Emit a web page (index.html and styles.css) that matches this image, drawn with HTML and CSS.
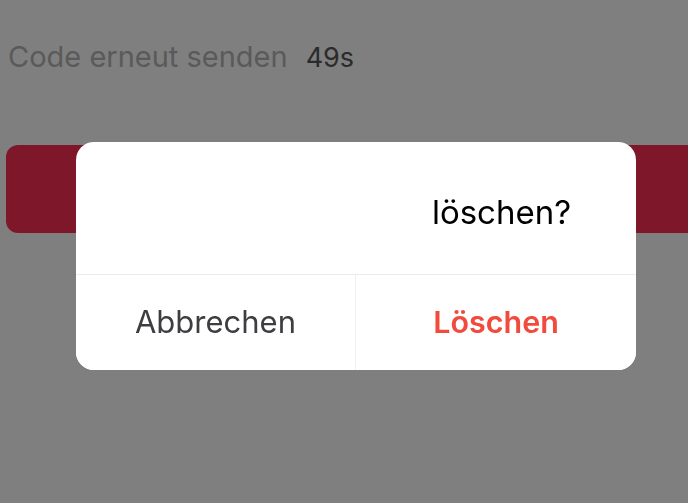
FILE: index.html
```html
<!DOCTYPE html>
<html lang="de">
<head>
<meta charset="utf-8">
<title>Code bestätigen</title>
<link rel="stylesheet" href="styles.css">
</head>
<body>
<main class="page">
  <div class="resend">
    <span class="resend-label">Code erneut senden</span>
    <span class="resend-timer">49s</span>
  </div>
  <button class="primary-btn" type="button">Bestätigen</button>
</main>
<div class="overlay">
  <div class="dialog" role="alertdialog">
    <div class="dialog-msg"><span class="msg-text">löschen?</span></div>
    <div class="dialog-actions">
      <button class="dialog-btn cancel" type="button">Abbrechen</button>
      <button class="dialog-btn destructive" type="button">Löschen</button>
    </div>
  </div>
</div>
</body>
</html>
```

FILE: styles.css
```css
* { box-sizing: border-box; }
html, body {
  margin: 0;
  width: 688px;
  height: 503px;
  overflow: hidden;
  background: #ffffff;
  font-family: Inter, "Liberation Sans", sans-serif;
}
.page {
  padding-top: 40px;
  overflow: hidden;
  height: 503px;
}
.resend {
  display: flex;
  align-items: baseline;
  gap: 18px;
  padding-left: 8px;
  font-size: 29px;
  line-height: 34px;
}
.resend-label { color: #b4b4b4; }
.resend-timer { color: #565656; font-size: 27px; }
.primary-btn {
  display: block;
  margin: 70px -30px 0 6px;
  width: calc(100% + 24px);
  height: 88px;
  border: 0;
  border-radius: 12px;
  background: #fa2e52;
  color: #fa2e52;
  font-size: 28px;
}
.overlay {
  position: fixed;
  inset: 0;
  background: rgba(0, 0, 0, 0.5);
}
.dialog {
  position: absolute;
  left: 76px;
  top: 142px;
  width: 560px;
  height: 228px;
  background: #ffffff;
  border-radius: 18px;
  overflow: hidden;
  display: flex;
  flex-direction: column;
}
.dialog-msg {
  height: 132px;
  display: flex;
  align-items: center;
  justify-content: center;
  padding-top: 8px;
  font-size: 33px;
  color: #000000;
}
.msg-text { padding-left: 291px; }
.dialog-actions {
  flex: 1;
  display: grid;
  grid-template-columns: 1fr 1fr;
  border-top: 1px solid #ebebef;
}
.dialog-btn {
  border: 0;
  background: #ffffff;
  font-family: Inter, "Liberation Sans", sans-serif;
  font-size: 31px;
  padding: 0 0 2px;
}
.cancel {
  color: #3e3e42;
  border-right: 1px solid #f0eef2;
}
.destructive {
  color: #f04b3c;
  font-weight: 600;
  font-size: 30.5px;
}
```
